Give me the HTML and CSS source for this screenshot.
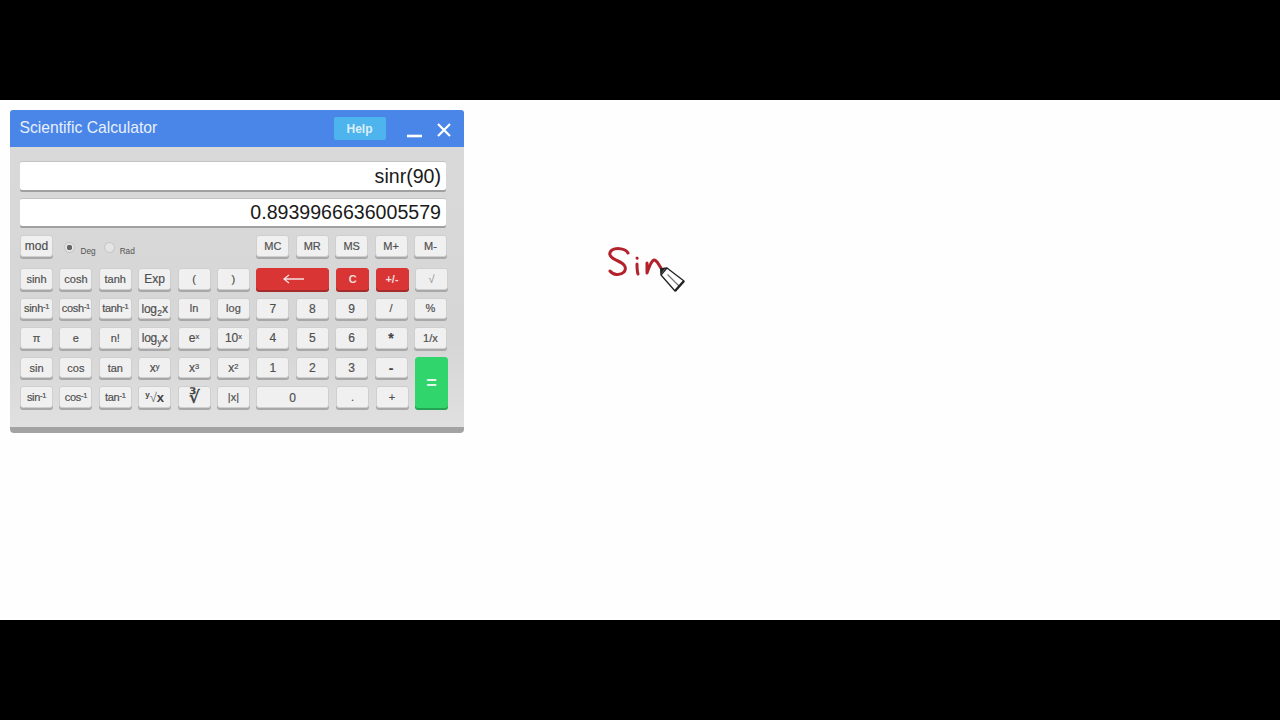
FILE: index.html
```html
<!DOCTYPE html>
<html lang="en">
<head>
<meta charset="utf-8">
<title>Scientific Calculator</title>
<link rel="stylesheet" href="styles.css">
</head>
<body>
<div class="bar"></div>
<main class="stage">
  <section class="calc">
    <header class="title">
      <h1>Scientific Calculator</h1>
      <span class="help">Help</span>
      <svg class="win-min" width="16" height="4" viewBox="0 0 16 4"><rect width="15" height="2.600" y="0.700" fill="#fff"/></svg>
      <svg class="win-close" width="16" height="16" viewBox="0 0 16 16"><path d="M2 2 L14 14 M14 2 L2 14" stroke="#fff" stroke-width="2.200" fill="none"/></svg>
    </header>
    <div class="body">
      <div class="display">sinr(90)</div>
      <div class="display second">0.8939966636005579</div>
      <div class="keys top">
        <button class="k big">mod</button>
        <div class="modes">
          <span class="radio on"></span><span class="rlabel">Deg</span>
          <span class="radio"></span><span class="rlabel">Rad</span>
        </div>
        <button class="k">MC</button><button class="k">MR</button><button class="k">MS</button><button class="k">M+</button><button class="k">M-</button>
      </div>
      <div class="keys">
        <button class="k">sinh</button><button class="k">cosh</button><button class="k">tanh</button><button class="k big">Exp</button><button class="k">(</button><button class="k">)</button>
        <button class="k red wide"><svg class="arrow" width="22" height="10" viewBox="0 0 22 10"><path d="M22 5 H2 M7 1 L2 5 L7 9" fill="none" stroke="#f4e2e2" stroke-width="1.300"/></svg></button><button class="k red nudge">C</button><button class="k red nudge">+/-</button><button class="k pale nudge">&#8730;</button>

        <button class="k tight">sinh<sup>-1</sup></button><button class="k tight">cosh<sup>-1</sup></button><button class="k tight">tanh<sup>-1</sup></button><button class="k tight big">log<sub>2</sub>x</button><button class="k">ln</button><button class="k">log</button>
        <button class="k big">7</button><button class="k big">8</button><button class="k big">9</button><button class="k">/</button><button class="k">%</button>

        <button class="k">&#960;</button><button class="k">e</button><button class="k">n!</button><button class="k tight big">log<sub>y</sub>x</button><button class="k big">e<sup>x</sup></button><button class="k big">10<sup>x</sup></button>
        <button class="k big">4</button><button class="k big">5</button><button class="k big">6</button><button class="k star">*</button><button class="k">1/x</button>

        <button class="k">sin</button><button class="k">cos</button><button class="k">tan</button><button class="k big">x<sup>y</sup></button><button class="k big">x<sup>3</sup></button><button class="k big">x<sup>2</sup></button>
        <button class="k big">1</button><button class="k big">2</button><button class="k big">3</button><button class="k star">-</button><button class="k green nudge">=</button>

        <button class="k tight">sin<sup>-1</sup></button><button class="k tight">cos<sup>-1</sup></button><button class="k tight">tan<sup>-1</sup></button><button class="k root"><span class="idx">y</span><span class="thin">&#8730;</span>x</button><button class="k cube">&#8731;</button><button class="k">|x|</button>
        <button class="k wide big">0</button><button class="k nudge">.</button><button class="k nudge">+</button>
      </div>
    </div>
    <div class="foot"></div>
  </section>
  <svg class="sketch" width="90" height="60" viewBox="0 0 90 60">
    <g fill="none" stroke="#b3222c" stroke-width="3" stroke-linecap="round" stroke-linejoin="round">
      <path d="M28 18 C26 14 17 12 12 15 C7 19 11 23 18 26 C25 29 27 33 24 37 C20 41 13 40 10 36"/>
      <path d="M37 29 C37 33 37 36 38 39"/>
      <path d="M37 23 L37.200 23.200"/>
      <path d="M47 28 C47 32 47 35 47 38 C49 32 51 26 54 25 C57 25 58 29 61 33"/>
    </g>
    <g stroke="#222" stroke-width="1.300" stroke-linejoin="round">
      <path d="M61 34 L67 33 L84 46 L75 56 L61 40 Z" fill="#fff"/>
      <path d="M67.500 39.500 L79 51" fill="none" stroke="#777"/>
      <path d="M61 40 L67 33" fill="none"/>
      <path d="M61 34 L64.500 33.500 L61 37.500 Z" fill="#222"/>
      <path d="M75 56 L84 46" fill="none" stroke-width="2.400"/>
    </g>
  </svg>
</main>
<div class="bar"></div>
</body>
</html>
```
FILE: styles.css
```css
* { box-sizing: border-box; }
html, body { margin: 0; padding: 0; }
body { width: 1280px; height: 720px; overflow: hidden; background: #000; font-family: "Liberation Sans", Arial, sans-serif; display: flex; flex-direction: column; }
.bar { height: 100px; flex: none; background: #000; }
.stage { height: 520px; flex: none; background: #fefefe; padding: 10px 0 0 9.500px; position: relative; }
.calc { width: 454.500px; height: 323px; display: flex; flex-direction: column; border-radius: 3px 3px 4px 4px; overflow: hidden; }
.title { height: 37px; flex: none; background: #4a86e8; display: flex; align-items: center; padding: 0 12.500px 0 10px; }
.title h1 { margin: 0 auto 1px 0; font-size: 15.700px; font-weight: 400; color: #e8f0fc; }
.help { width: 52px; height: 23px; background: #4db4ee; border-radius: 2px; color: #dceefb; font-size: 12px; font-weight: 700; display: flex; align-items: center; justify-content: center; margin-right: 21px; }
.win-min { margin: 14px 13px 0 0; }
.win-close { margin: 3px 0 0 0; }
.body { flex: 1; background: linear-gradient(#d9d9d9, #d6d6d6 70%, #e0e0e0); padding: 15px 0 0 10.500px; }
.foot { height: 6px; flex: none; background: #a3a3a3; }
.display { width: 426px; height: 28px; background: #fff; border-radius: 2px; box-shadow: 0 2px 0 #a0a0a0, 0 -1px 0 #c4c4c4; text-align: right; padding: 0 5px; font-size: 19.600px; line-height: 28px; color: #1a1a1a; }
.second { margin-top: 9px; height: 27px; line-height: 27px; }
.keys { display: grid; grid-template-columns: repeat(11, 33px); column-gap: 6.400px; grid-auto-rows: 21.600px; row-gap: 8px; margin-top: 11.400px; }
.keys.top { margin-top: 9px; }
.modes { grid-column: span 5; display: flex; align-items: center; padding-left: 5px; }
.radio { width: 11px; height: 11px; border-radius: 50%; background: #e4e4e4; border: 1px solid #c4c4c4; display: block; margin-top: 4px; flex: none; }
.radio.on { background: radial-gradient(circle, #666 0 2.500px, #e4e4e4 3px); }
.rlabel { font-size: 8.300px; color: #555; margin: 11px 8px 0 5px; }
.k { margin: 0; padding: 1px 0 0; border: 1px solid #cfcfcf; border-radius: 3px; background: #f0f0f0; box-shadow: 0 2px 0 #a8a8a8; font-family: "Liberation Sans", Arial, sans-serif; font-size: 11px; font-weight: 400; color: #505050; line-height: 1; text-align: center; white-space: nowrap; -webkit-text-stroke: 0.200px #505050; }
.k sup { font-size: 7.500px; line-height: 0; vertical-align: 3px; }
.k sub { font-size: 8.500px; line-height: 0; vertical-align: -3px; margin: 0 0.500px; }
.big { font-size: 12px; }
.star { font-size: 14px; font-weight: 700; color: #444; }
.tight { letter-spacing: -0.300px; }
.pale { color: #888; -webkit-text-stroke: 0; background: #efefef; }
.wide { grid-column: span 2; }
.nudge { margin-left: 1px; margin-right: -1px; }
.red { background: #d93535; border-color: #d93535; color: #f3dcdc; box-shadow: 0 2px 0 #a52a2a; font-weight: 700; -webkit-text-stroke: 0; }
.arrow { display: block; margin: 0 0 0 25px; }
.green { grid-row: span 2; background: #30d66b; border-color: #30d66b; color: #e6f8ec; box-shadow: 0 2px 0 #22a452; font-size: 18px; font-weight: 700; -webkit-text-stroke: 0; }
.root { font-size: 13px; font-weight: 700; -webkit-text-stroke: 0; color: #444; }
.idx { font-size: 8px; position: relative; top: -5px; }
.thin { font-weight: 400; color: #777; }
.cube { font-family: "DejaVu Sans", sans-serif; font-size: 17px; font-weight: 700; color: #444; -webkit-text-stroke: 0; }
.sketch { position: absolute; left: 600px; top: 135px; }
```
